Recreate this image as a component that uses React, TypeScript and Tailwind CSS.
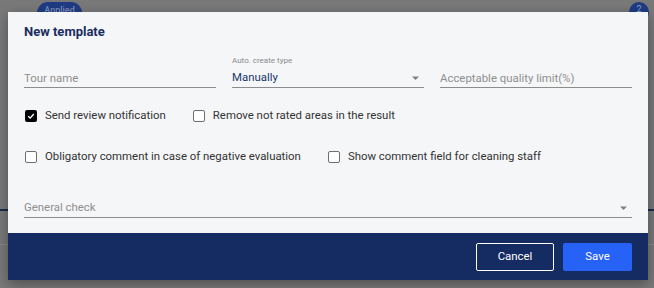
import React from "react";

const font = { fontFamily: "Roboto, 'Noto Sans', sans-serif" };

function Arrow() {
  return (
    <svg width="7" height="4" viewBox="0 0 7 4" className="shrink-0">
      <path d="M0 0.5 L7 0.5 L3.5 4 Z" fill="#808080" />
    </svg>
  );
}

function Checkbox({ checked, label }: { checked?: boolean; label: string }) {
  return (
    <label className="flex h-5 items-center gap-2">
      <span
        className={
          checked
            ? "flex h-3 w-3 items-center justify-center rounded-[2px] bg-black"
            : "h-3 w-3 rounded-[2px] border border-[#6f6f6f] bg-white"
        }
      >
        {checked && (
          <svg width="8" height="8" viewBox="0 0 8 8">
            <path d="M1.2 4.2 L3.2 6 L6.8 2" stroke="#fff" strokeWidth="1.3" fill="none" />
          </svg>
        )}
      </span>
      <span className="text-[11.4px] text-[#333]">{label}</span>
    </label>
  );
}

function TextField({ placeholder }: { placeholder: string }) {
  return (
    <div className="flex flex-col">
      <div className="h-[10px]" />
      <div className="flex h-[22px] items-center border-b border-[#8c8c8c] pt-[4px] text-[11.4px] text-[#8f8f8f]">
        {placeholder}
      </div>
    </div>
  );
}

export default function App() {
  return (
    <div className="relative h-[288px] w-[654px] overflow-hidden bg-[#797979]" style={font}>
      {/* dimmed page behind the dialog */}
      <div className="absolute left-[37px] top-[2px] flex h-[22px] w-[45px] items-start justify-center rounded-full bg-[#1f3b83] pt-[2px] text-[9px] font-medium text-[#7b8db8]">
        Applied
      </div>
      <div className="absolute left-[629px] top-[2px] flex h-[20px] w-[20px] items-start justify-center rounded-full bg-[#1f3b83] pt-[1px] text-[9px] text-[#8fa0c8]">
        2
      </div>
      <div className="absolute left-0 top-[209px] h-[2px] w-full bg-[#1d2a4c]" />
      <div className="absolute left-0 top-[244px] h-px w-full bg-[#868686]" />

      {/* dialog */}
      <div className="absolute left-[8px] top-[12px] flex h-[268px] w-[640px] flex-col bg-[#f5f6f8] shadow-[0_4px_12px_rgba(0,0,0,0.35)]">
        <div className="flex flex-1 flex-col px-4">
          <h2 className="mt-[10px] h-5 text-[13px] font-bold leading-5 text-[#1a2e62]">New template</h2>

          <div className="mt-[14px] grid grid-cols-3 gap-4">
            <TextField placeholder="Tour name" />
            <div className="flex flex-col">
              <div className="h-[10px] text-[8px] leading-[10px] text-[#8a8a8a]">Auto. create type</div>
              <div className="flex h-[22px] items-center justify-between border-b border-[#8c8c8c] pr-[5px] pt-[2px] text-[11.4px] text-[#22386e]">
                Manually
                <Arrow />
              </div>
            </div>
            <TextField placeholder="Acceptable quality limit(%)" />
          </div>

          <div className="mt-[18px] flex gap-[27px] pl-px">
            <Checkbox checked label="Send review notification" />
            <Checkbox label="Remove not rated areas in the result" />
          </div>

          <div className="mt-[21px] flex gap-[27px] pl-px">
            <Checkbox label="Obligatory comment in case of negative evaluation" />
            <Checkbox label="Show comment field for cleaning staff" />
          </div>

          <div className="mt-[29px] flex h-[22px] items-center justify-between border-b border-[#8c8c8c] pr-[5px] pt-[2px] text-[11.4px] text-[#8f8f8f]">
            General check
            <Arrow />
          </div>
        </div>

        <div className="flex h-[47px] items-center justify-end gap-[9px] bg-[#152c62] px-4">
          <button className="h-[28px] w-[78px] rounded-[2px] border border-white text-[11.4px] text-white">
            Cancel
          </button>
          <button className="h-[28px] w-[69px] rounded-[2px] bg-[#2762f6] text-[11.4px] text-white">
            Save
          </button>
        </div>
      </div>
    </div>
  );
}
